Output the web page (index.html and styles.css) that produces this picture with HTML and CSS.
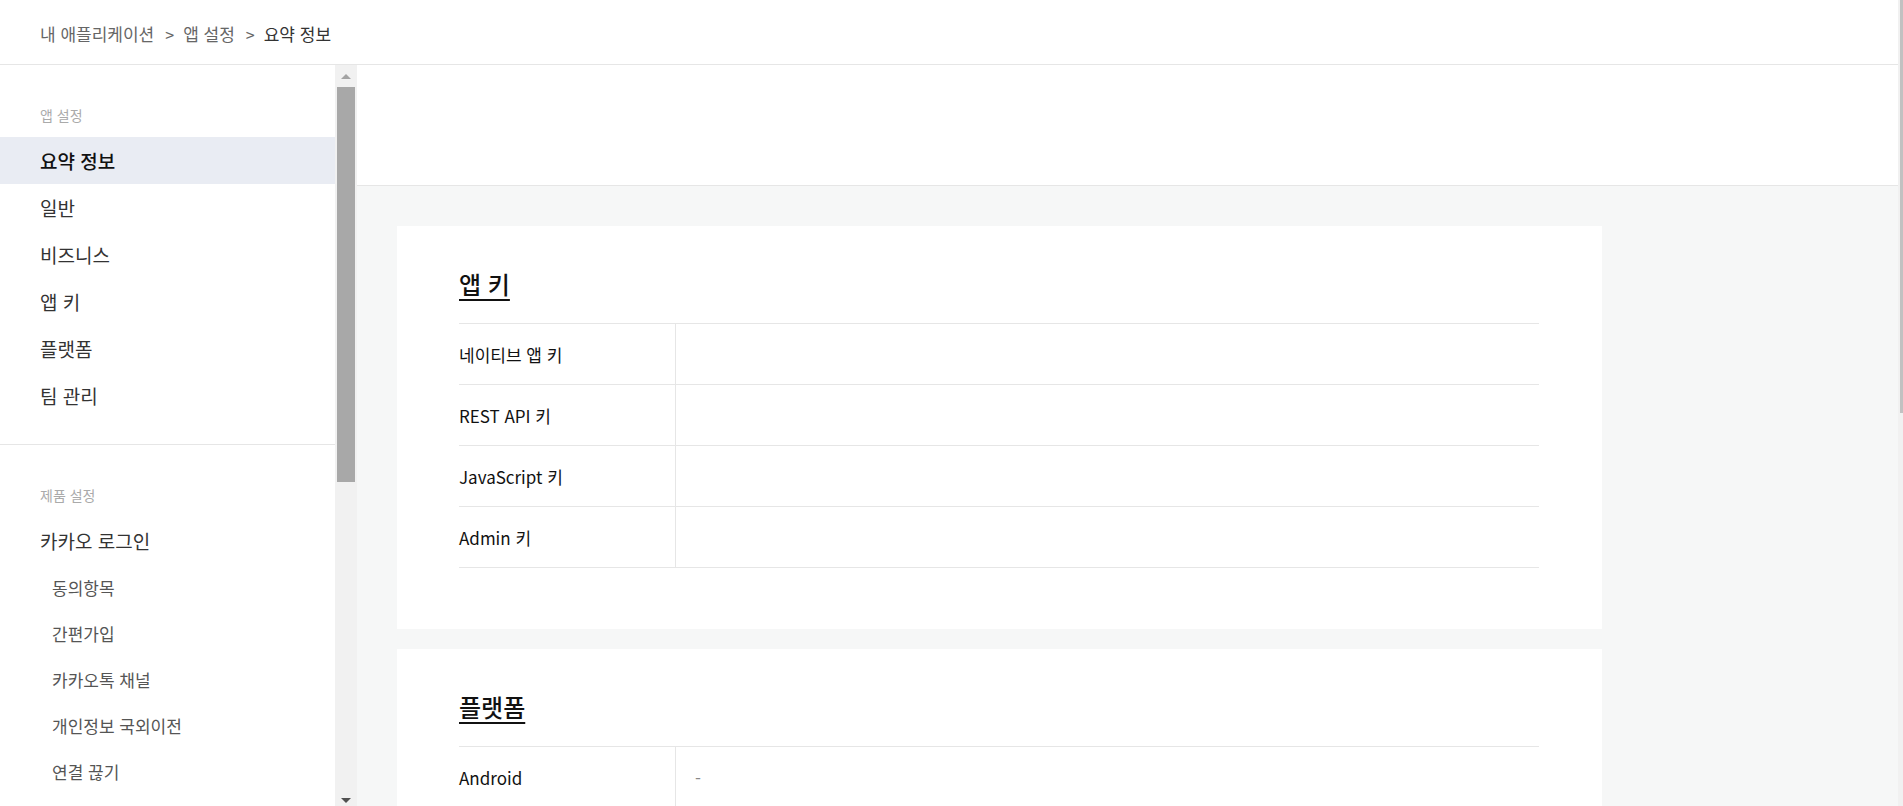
FILE: index.html
```html
<!DOCTYPE html>
<html lang="ko">
<head>
<meta charset="utf-8">
<title>요약 정보</title>
<link rel="stylesheet" href="styles.css">
</head>
<body>
<div class="page">
  <div class="app">
    <header class="topbar">
      <nav class="crumbs">
        <span class="crumb">내 애플리케이션</span>
        <span class="sep">&gt;</span>
        <span class="crumb">앱 설정</span>
        <span class="sep">&gt;</span>
        <span class="crumb current">요약 정보</span>
      </nav>
    </header>
    <div class="body">
      <aside class="sidebar">
        <div class="side-nav">
          <section class="group">
            <div class="group-title">앱 설정</div>
            <ul class="menu">
              <li class="menu-item active">요약 정보</li>
              <li class="menu-item">일반</li>
              <li class="menu-item">비즈니스</li>
              <li class="menu-item">앱 키</li>
              <li class="menu-item">플랫폼</li>
              <li class="menu-item">팀 관리</li>
            </ul>
          </section>
          <section class="group">
            <div class="group-title">제품 설정</div>
            <ul class="menu">
              <li class="menu-item">카카오 로그인</li>
              <li class="sub-item">동의항목</li>
              <li class="sub-item">간편가입</li>
              <li class="sub-item">카카오톡 채널</li>
              <li class="sub-item">개인정보 국외이전</li>
              <li class="sub-item">연결 끊기</li>
              <li class="sub-item">고급</li>
            </ul>
          </section>
        </div>
        <div class="vscroll">
          <div class="vbtn"><span class="arrow-up"></span></div>
          <div class="vtrack"><div class="vthumb"></div></div>
          <div class="vbtn"><span class="arrow-down"></span></div>
        </div>
      </aside>
      <main class="content">
        <div class="content-top"></div>
        <div class="cards">
          <section class="card">
            <h2 class="card-title">앱 키</h2>
            <table class="info-table">
              <tr><th>네이티브 앱 키</th><td></td></tr>
              <tr><th>REST API 키</th><td></td></tr>
              <tr><th>JavaScript 키</th><td></td></tr>
              <tr><th>Admin 키</th><td></td></tr>
            </table>
          </section>
          <section class="card">
            <h2 class="card-title">플랫폼</h2>
            <table class="info-table">
              <tr><th>Android</th><td class="empty">-</td></tr>
              <tr><th>iOS</th><td class="empty">-</td></tr>
              <tr><th>Web</th><td class="empty">-</td></tr>
            </table>
          </section>
        </div>
      </main>
    </div>
  </div>
  <div class="page-scroll"><div class="page-thumb"></div></div>
</div>
</body>
</html>
```

FILE: styles.css
```css
html, body {
  margin: 0;
  padding: 0;
  overflow: hidden;
}
body {
  font-family: "Noto Sans CJK KR", "Noto Sans", sans-serif;
  color: #222;
  background: #fff;
}
.page {
  display: flex;
  height: 806px;
}
.app {
  flex: 1;
  min-width: 0;
  display: flex;
  flex-direction: column;
}
.topbar {
  flex-shrink: 0;
  height: 60px;
  padding-top: 4px;
  border-bottom: 1px solid #e6e6e6;
  display: flex;
  align-items: center;
  padding-left: 40px;
}
.crumbs {
  font-size: 17px;
  line-height: 24px;
  color: #666;
  display: flex;
  align-items: center;
}
.crumb.current {
  color: #333;
}
.sep {
  margin: 0 9px 0 11px;
  color: #666;
  font-size: 16px;
}
.body {
  flex: 1;
  min-height: 0;
  display: flex;
}
.sidebar {
  flex-shrink: 0;
  display: flex;
}
.side-nav {
  width: 335px;
  overflow: hidden;
}
.group {
  padding: 40px 0 25px;
  border-bottom: 1px solid #e6e6e6;
}
.group-title {
  padding-left: 40px;
  font-size: 14px;
  line-height: 20px;
  color: #aaa;
  margin-bottom: 12px;
}
.menu {
  list-style: none;
  margin: 0;
  padding: 0;
}
.menu-item {
  height: 47px;
  display: flex;
  align-items: center;
  padding-left: 40px;
  font-size: 19px;
  color: #333;
}
.menu-item.active {
  background: #e9ecf3;
  color: #111;
  font-weight: 500;
}
.sub-item {
  height: 46px;
  display: flex;
  align-items: center;
  padding-left: 52px;
  font-size: 17px;
  color: #555;
}
.vscroll {
  width: 22px;
  background: #f1f1f1;
  display: flex;
  flex-direction: column;
}
.vbtn {
  height: 22px;
  flex-shrink: 0;
  display: flex;
  align-items: center;
  justify-content: center;
}
.arrow-up {
  width: 0;
  height: 0;
  border-left: 5px solid transparent;
  border-right: 5px solid transparent;
  border-bottom: 5px solid #a3a3a3;
}
.arrow-down {
  width: 0;
  height: 0;
  border-left: 5px solid transparent;
  border-right: 5px solid transparent;
  border-top: 5px solid #505050;
  margin-top: 10px;
}
.vtrack {
  flex: 1;
  padding: 0 2px;
}
.vthumb {
  height: 395px;
  background: #a8a8a8;
}
.content {
  flex: 1;
  min-width: 0;
  background: #f6f7f7;
  overflow: hidden;
}
.content-top {
  height: 120px;
  background: #fff;
  border-bottom: 1px solid #e6e6e6;
}
.cards {
  padding: 40px;
  display: flex;
  flex-direction: column;
  align-items: flex-start;
  gap: 20px;
}
.card {
  width: 1205px;
  box-sizing: border-box;
  background: #fff;
  padding: 40px 63px 61px 62px;
}
.card-title {
  margin: 0 0 21px;
  font-size: 24px;
  line-height: 36px;
  font-weight: 500;
  color: #111;
  text-decoration: underline;
  text-decoration-thickness: 2px;
  text-underline-offset: 5px;
}
.info-table {
  width: 100%;
  border-collapse: collapse;
  border-top: 1px solid #e6e6e6;
}
.info-table th,
.info-table td {
  height: 60px;
  padding: 0;
  border-bottom: 1px solid #e6e6e6;
  font-size: 17px;
  vertical-align: middle;
}
.info-table th {
  width: 216px;
  text-align: left;
  font-weight: 400;
  color: #111;
}
.info-table td {
  border-left: 1px solid #e6e6e6;
  padding-left: 19px;
  color: #333;
}
.info-table td.empty {
  color: #888;
}
.page-scroll {
  width: 5px;
  flex-shrink: 0;
  background: #f1f1f1;
}
.page-thumb {
  margin-left: 2px;
  width: 3px;
  height: 413px;
  background: #c1c1c1;
}
```
